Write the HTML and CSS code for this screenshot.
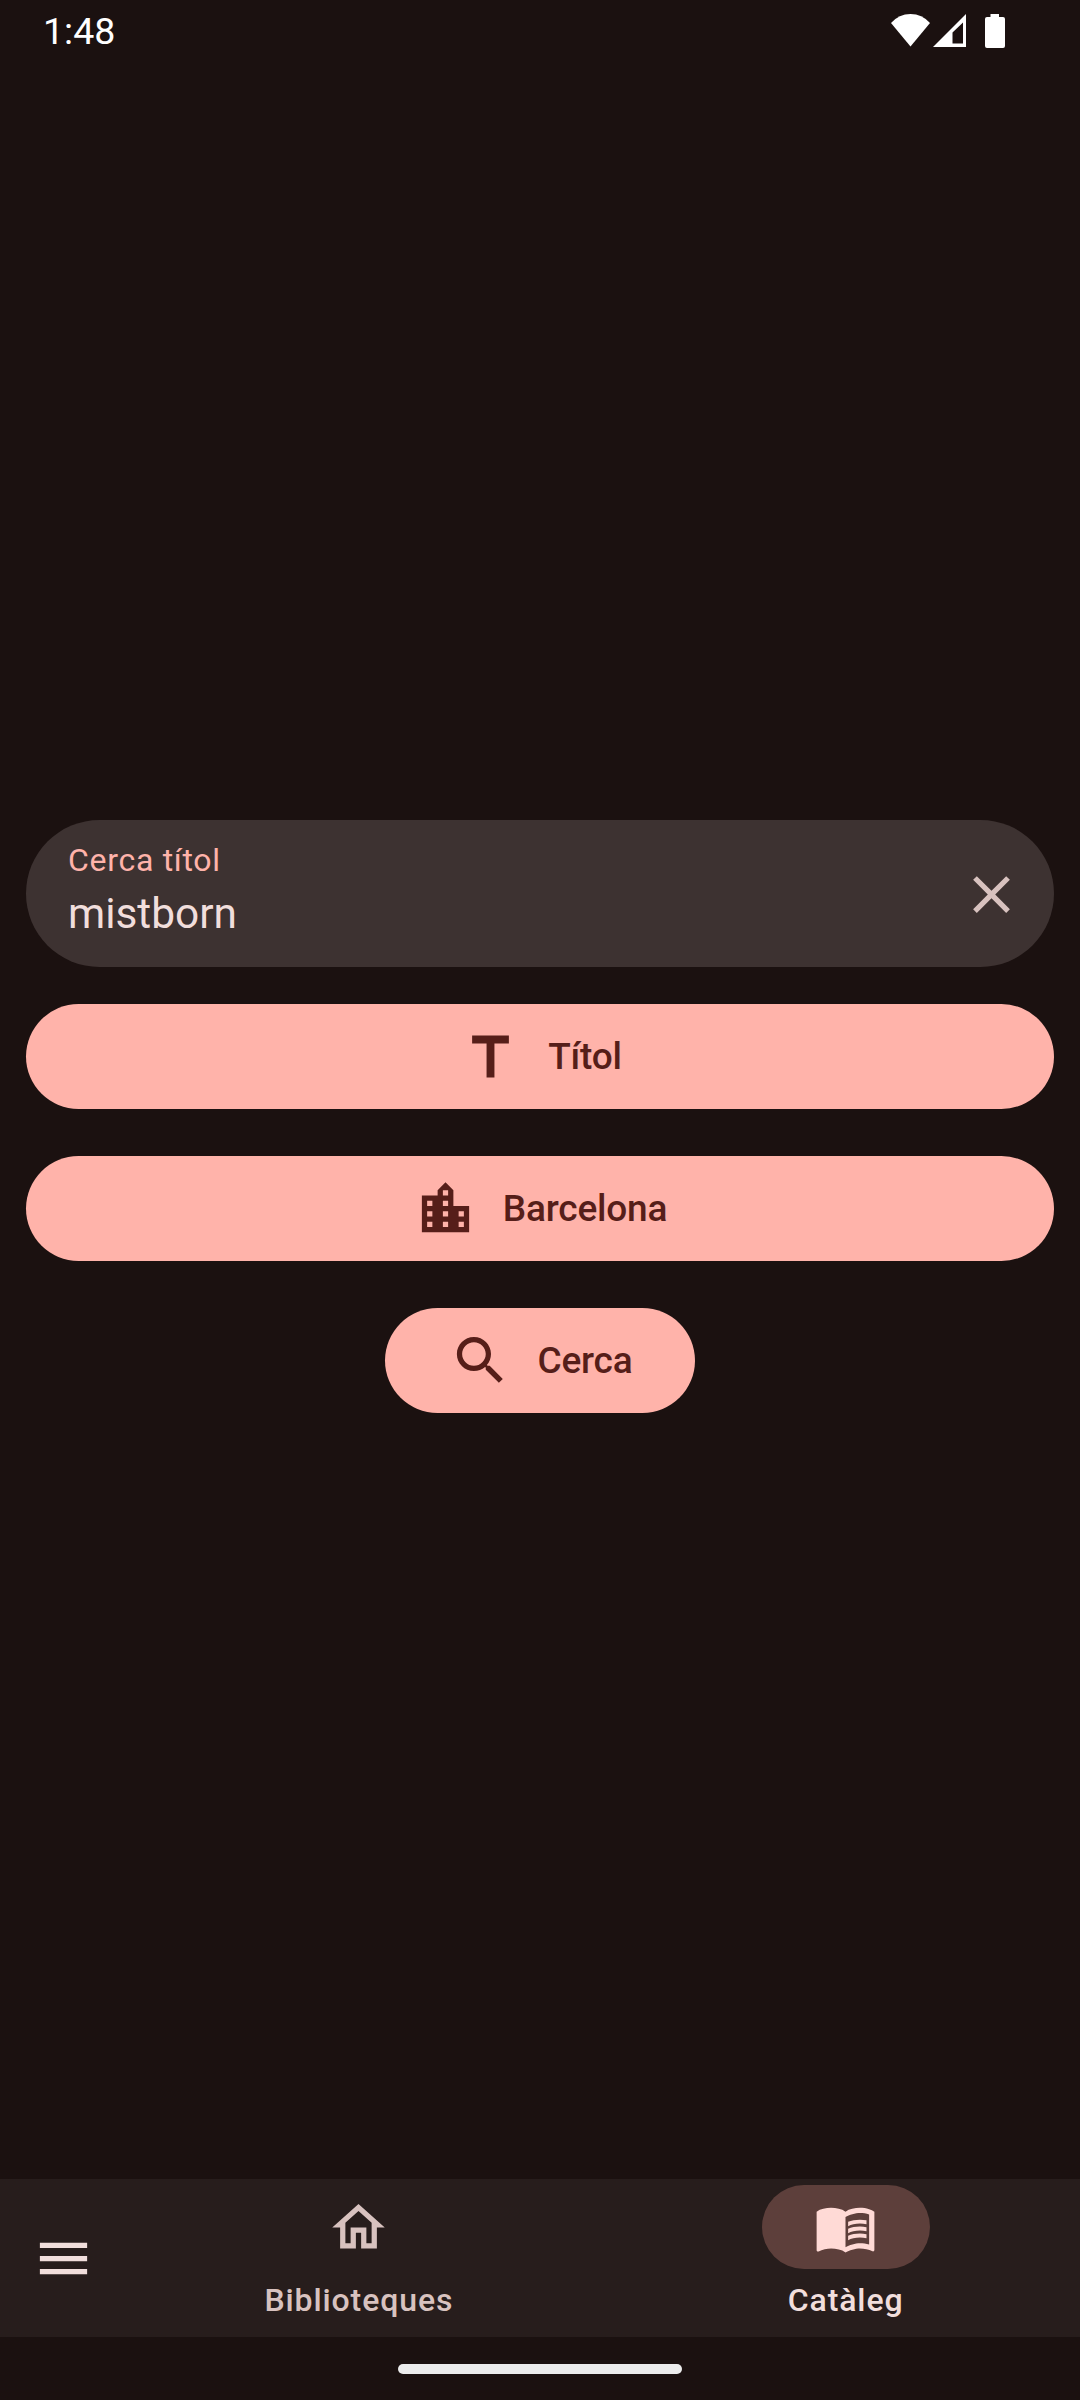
FILE: index.html
```html
<!DOCTYPE html>
<html lang="ca">
<head>
<meta charset="utf-8">
<title>Catàleg</title>
<link rel="stylesheet" href="styles.css">
</head>
<body>
<div class="app">
  <header class="status-bar">
    <span class="clock">1:48</span>
    <svg class="status-icons" viewBox="0 0 116 36" aria-hidden="true">
      <path d="M20.500 34.500L1 11Q9 2 20.500 2T40 11z"/>
      <path fill-rule="evenodd" d="M76 2v33H43zM73 10.500L62.500 20.500V31.500h10.500z"/>
      <path d="M100.500 2h8.500v3h4a2 2 0 0 1 2 2v27a2 2 0 0 1-2 2H97a2 2 0 0 1-2-2V7a2 2 0 0 1 2-2h3.500z"/>
    </svg>
  </header>

  <main class="search">
    <div class="field">
      <div class="field-text">
        <span class="field-label">Cerca títol</span>
        <span class="field-value">mistborn</span>
      </div>
      <svg class="icon" viewBox="0 0 24 24"><path d="M19 6.410L17.590 5 12 10.590 6.410 5 5 6.410 10.590 12 5 17.590 6.410 19 12 13.410 17.590 19 19 17.590 13.410 12z"/></svg>
    </div>
    <div class="actions">
      <button class="button wide">
        <svg class="icon" viewBox="0 0 24 24"><path d="M5 4v3h5.500v13h3V7H19V4z"/></svg>
        <span>Títol</span>
      </button>
      <button class="button wide">
        <svg class="icon" viewBox="0 0 24 24"><path d="M15 11V5l-3-3-3 3v2H3v14h18V11h-6zm-8 8H5v-2h2v2zm0-4H5v-2h2v2zm0-4H5V9h2v2zm6 8h-2v-2h2v2zm0-4h-2v-2h2v2zm0-4h-2V9h2v2zm0-4h-2V5h2v2zm6 12h-2v-2h2v2zm0-4h-2v-2h2v2z"/></svg>
        <span>Barcelona</span>
      </button>
      <button class="button">
        <svg class="icon" viewBox="0 0 24 24"><path d="M15.500 14h-.79l-.28-.27C15.410 12.590 16 11.110 16 9.500 16 5.910 13.090 3 9.500 3S3 5.910 3 9.500 5.910 16 9.500 16c1.610 0 3.090-.59 4.230-1.570l.27.28v.79l5 4.990L20.490 19l-4.990-5zm-6 0C7.010 14 5 11.990 5 9.500S7.010 5 9.500 5 14 7.010 14 9.500 11.990 14 9.500 14z"/></svg>
        <span>Cerca</span>
      </button>
    </div>
  </main>

  <nav class="nav-bar">
    <div class="menu">
      <svg class="icon" viewBox="0 0 24 24"><path d="M3 18h18v-2H3v2zm0-5h18v-2H3v2zm0-7v2h18V6H3z"/></svg>
    </div>
    <div class="tab">
      <span class="indicator">
        <svg class="icon" viewBox="0 0 24 24"><path d="M12 5.690l5 4.500V18h-2v-6H9v6H7v-7.810l5-4.500M12 3L2 12h3v8h6v-6h2v6h6v-8h3L12 3z"/></svg>
      </span>
      <span class="tab-label">Biblioteques</span>
    </div>
    <div class="tab active">
      <span class="indicator">
        <svg class="icon" viewBox="0 0 24 24"><path d="M21 5c-1.110-.35-2.330-.5-3.500-.5-1.950 0-4.050.4-5.500 1.500-1.450-1.100-3.550-1.500-5.500-1.500S2.450 4.900 1 6v14.650c0 .25.25.5.5.5.1 0 .15-.05.25-.05C3.100 20.450 5.050 20 6.500 20c1.950 0 4.050.4 5.500 1.500 1.350-.85 3.800-1.500 5.500-1.500 1.650 0 3.350.3 4.750 1.050.1.050.15.050.25.050.25 0 .5-.25.5-.5V6c-.6-.45-1.250-.75-2-1zm0 13.500c-1.100-.35-2.300-.5-3.500-.5-1.700 0-4.150.65-5.500 1.500V8c1.350-.85 3.800-1.500 5.500-1.500 1.200 0 2.400.15 3.500.5v11.500z"/><path d="M17.500 10.500c.88 0 1.730.09 2.500.26V9.240C19.210 9.090 18.360 9 17.500 9c-1.700 0-3.240.29-4.500.83v1.660c1.130-.64 2.700-.99 4.500-.99zM13 12.490v1.660c1.130-.64 2.700-.99 4.500-.99.88 0 1.730.09 2.500.26V11.900c-.79-.15-1.640-.24-2.500-.24-1.700 0-3.240.3-4.500.83zM17.500 14.330c-1.700 0-3.240.29-4.500.83v1.660c1.130-.64 2.700-.99 4.500-.99.88 0 1.730.09 2.500.26v-1.520c-.79-.16-1.640-.24-2.500-.24z"/></svg>
      </span>
      <span class="tab-label">Catàleg</span>
    </div>
  </nav>
  <footer class="gesture-area"><span class="gesture-handle"></span></footer>
</div>
</body>
</html>
```
FILE: styles.css
```css
* {
  box-sizing: border-box;
}

body {
  margin: 0;
  background: #1b1110;
  font-family: Roboto, sans-serif;
}

.app {
  display: flex;
  flex-direction: column;
  width: 1080px;
  height: 2400px;
}

.icon {
  display: block;
  flex: none;
  width: 63px;
  height: 63px;
  fill: currentColor;
}

.status-bar {
  display: flex;
  justify-content: space-between;
  align-items: flex-start;
  height: 63px;
  padding: 12px 74px 0 43px;
  color: #fff;
}

.clock {
  padding-top: 1px;
  font-size: 37.5px;
  line-height: 36px;
}

.status-icons {
  width: 116px;
  height: 36px;
  fill: #fff;
}

.search {
  display: flex;
  flex: 1;
  flex-direction: column;
  justify-content: center;
  gap: 37px;
  padding: 0 26px 10px;
}

.field {
  display: flex;
  justify-content: space-between;
  align-items: center;
  height: 147px;
  padding: 2px 31px 0 42px;
  border-radius: 73.5px;
  background: #3d3231;
  color: #d8c2bf;
}

.field-text {
  display: flex;
  flex-direction: column;
  padding-bottom: 4px;
}

.field-label {
  color: #ffb3aa;
  font-size: 32px;
  line-height: 42px;
  letter-spacing: 0.7px;
}

.field-value {
  color: #f1dedc;
  font-size: 42.4px;
  line-height: 65px;
  letter-spacing: 0;
}

.actions {
  display: flex;
  flex-direction: column;
  align-items: center;
  gap: 47px;
}

.button {
  display: flex;
  justify-content: center;
  align-items: center;
  gap: 26px;
  height: 105px;
  padding: 0 63px 0 64px;
  border: 0;
  border-radius: 52.5px;
  background: #ffb3aa;
  color: #561e19;
  font: 500 37px/52px Roboto, sans-serif;
  letter-spacing: -0.2px;
}

.button span {
  padding-top: 1px;
}

.wide {
  width: 100%;
}

.nav-bar {
  display: flex;
  height: 158px;
  padding-right: 1.5px;
  background: #271d1c;
}

.menu {
  display: grid;
  place-items: center;
  width: 126px;
  color: #f1dedc;
}

.tab {
  display: flex;
  flex: 1;
  flex-direction: column;
  align-items: center;
  gap: 10px;
  padding-top: 6px;
  color: #d8c2bf;
}

.tab + .tab {
  margin-left: 21px;
}

.indicator {
  display: grid;
  place-items: center;
  width: 168px;
  height: 84px;
  border-radius: 42px;
}

.tab-label {
  font-size: 32px;
  font-weight: 500;
  line-height: 42px;
  letter-spacing: 0.9px;
}

.active {
  color: #f1dedc;
}

.active .indicator {
  background: #5d3f3b;
  color: #ffdad6;
}

.gesture-area {
  display: flex;
  justify-content: center;
  align-items: center;
  height: 63px;
}

.gesture-handle {
  width: 284px;
  height: 10px;
  border-radius: 5px;
  background: #ececec;
}
```
